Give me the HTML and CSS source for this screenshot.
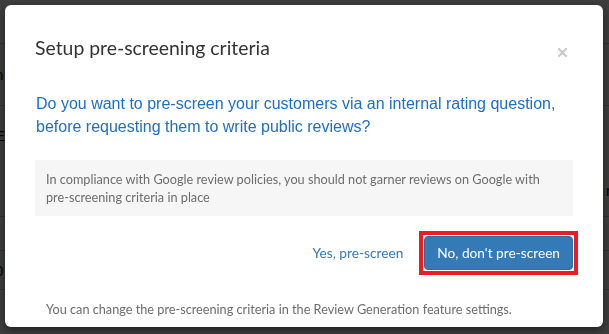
FILE: index.html
```html
<!DOCTYPE html>
<html lang="en">
<head>
<meta charset="utf-8">
<title>Setup pre-screening criteria</title>
<link rel="stylesheet" href="styles.css">
</head>
<body>
<div class="page">
  <div class="page-row r1"></div>
  <div class="page-row r2"><span class="ghost">n</span></div>
  <div class="page-row r3"><span class="ghost">E</span></div>
  <div class="page-row r4"><span class="ghost">t</span><span class="ghost-r">r</span></div>
  <div class="page-row r5"><span class="ghost">t</span></div>
  <div class="page-row r6"><span class="ghost">0</span></div>
  <div class="page-row r7"></div>
</div>

<div class="backdrop">
  <div class="modal" role="dialog" aria-labelledby="modal-title">
    <div class="modal-header">
      <h4 class="modal-title" id="modal-title">Setup pre-screening criteria</h4>
      <button class="close" type="button" aria-label="Close">
        <svg width="9" height="9" viewBox="0 0 9 9" aria-hidden="true"><path d="M1 1 L8 8 M8 1 L1 8" stroke="#c9c9c9" stroke-width="2.2" stroke-linecap="square"/></svg>
      </button>
    </div>
    <div class="modal-body">
      <p class="question">Do you want to pre-screen your customers via an internal rating question, before requesting them to write public reviews?</p>
      <div class="notice">In compliance with Google review policies, you should not garner reviews on Google with pre-screening criteria in place</div>
      <div class="actions">
        <button class="btn btn-link" type="button">Yes, pre-screen</button>
        <span class="highlight-frame">
          <button class="btn btn-primary" type="button">No, don't pre-screen</button>
        </span>
      </div>
      <p class="hint">You can change the pre-screening criteria in the Review Generation feature settings.</p>
    </div>
  </div>
</div>
</body>
</html>
```
FILE: styles.css
```css
* { box-sizing: border-box; }

html, body {
  margin: 0;
  height: 100%;
}

body {
  background: #ffffff;
  font-family: Lato, "Liberation Sans", sans-serif;
  color: #333333;
  overflow: hidden;
}

/* page behind the backdrop */
.page {
  display: flex;
  flex-direction: column;
}
.page-row {
  border-bottom: 1px solid #c8c8c8;
  display: flex;
  justify-content: space-between;
  align-items: center;
  font: 15px "Liberation Sans", sans-serif;
  color: #111;
}
.r1 { height: 44px; }
.r2 { height: 62px; }
.r3 { height: 59px; border-bottom-color: transparent; }
.r4 { height: 52px; }
.r5 { height: 34px; }
.r6 { height: 39px; }
.r7 { height: 40px; border-bottom: 0; }
.ghost { margin-left: -5px; }
.ghost-r { margin-right: -2px; }

/* backdrop + dialog */
.backdrop {
  position: fixed;
  inset: 0;
  background: rgba(0, 0, 0, 0.76);
  padding: 5px 6px 7px 5px;
  display: flex;
}

.modal {
  flex: 1;
  background: #ffffff;
  border-radius: 6px;
  box-shadow: 0 3px 9px rgba(0, 0, 0, 0.5);
  display: flex;
  flex-direction: column;
}

.modal-header {
  display: flex;
  justify-content: space-between;
  align-items: flex-start;
  padding: 29px 36px 0 30px;
}

.modal-title {
  margin: 0;
  font-family: Lato, sans-serif;
  font-weight: 400;
  font-size: 19.4px;
  line-height: 28px;
  color: #333333;
}

.close {
  border: 0;
  background: none;
  padding: 0;
  margin-top: 14px;
  width: 9px;
  height: 9px;
  display: flex;
  cursor: pointer;
}

.modal-body {
  padding: 0 30px 8px 30px;
  display: flex;
  flex-direction: column;
}

.question {
  margin: 30px 0 0 0;
  font-family: "Liberation Sans", Arial, sans-serif;
  font-size: 16px;
  line-height: 23px;
  color: #1c6fc2;
  padding-left: 1px;
}

.notice {
  margin-top: 22px;
  background: #f6f6f6;
  padding: 10px 11px;
  font-family: Lato, sans-serif;
  font-size: 12.7px;
  line-height: 18px;
  color: #6d6d6d;
}

.actions {
  margin: 15px -5px 0 0;
  display: flex;
  justify-content: flex-end;
  align-items: center;
  gap: 3px;
}

.btn {
  font-family: Lato, sans-serif;
  font-size: 13.7px;
  line-height: 20px;
  padding: 6px 12px;
  border: 1px solid transparent;
  border-radius: 4px;
  cursor: pointer;
}

.btn-link {
  background: none;
  color: #337ab7;
}

.btn-primary {
  background: #337ab7;
  border-color: #2e6da4;
  color: #ffffff;
  display: block;
}

.highlight-frame {
  display: flex;
  border: 4px solid #ec1c24;
  padding: 1px;
  background: #ffffff;
}

.hint {
  margin: 25px 0 0 0;
  padding-left: 11px;
  font-family: Lato, sans-serif;
  font-size: 12.7px;
  line-height: 18px;
  color: #6d6d6d;
}
```
